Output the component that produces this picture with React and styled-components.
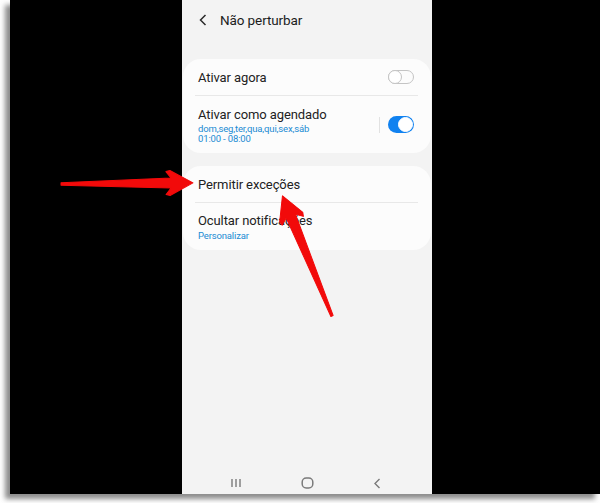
import React from 'react'
import styled, { createGlobalStyle } from 'styled-components'

const GlobalStyle = createGlobalStyle`
  html, body {
    margin: 0;
    padding: 0;
    background: #ffffff;
  }
  body {
    font-family: Roboto, "Noto Sans", "Liberation Sans", sans-serif;
    width: 600px;
    height: 503px;
    overflow: hidden;
  }
`

const Page = styled.div`
  position: relative;
  width: 600px;
  height: 503px;
`

const Backdrop = styled.div`
  margin-left: 10px;
  width: 590px;
  height: 494px;
  background: #000000;
  box-shadow: -5px 5px 5px rgba(120, 120, 120, 0.85);
  display: flex;
  padding-left: 172px;
  box-sizing: border-box;
`

const Screen = styled.div`
  width: 250px;
  height: 494px;
  background: #f3f3f3;
  display: flex;
  flex-direction: column;
`

const Header = styled.div`
  height: 40px;
  display: flex;
  align-items: center;
  padding-left: 17px;
  gap: 13px;
  color: #1c1c1c;
  font-size: 13.5px;
  letter-spacing: -0.1px;
`

const Card = styled.div`
  margin: ${p => p.$top}px 1px 0 1px;
  background: #fcfcfc;
  border-radius: 18px;
  display: flex;
  flex-direction: column;
`

const Row = styled.div`
  height: ${p => p.$height}px;
  display: flex;
  align-items: center;
  padding: 0 17px 0 15px;
`

const RowText = styled.div`
  flex: 1;
  display: flex;
  flex-direction: column;
`

const Title = styled.div`
  font-size: 13px;
  color: #222222;
  line-height: 17px;
  letter-spacing: -0.1px;
`

const Sub = styled.div`
  font-size: 9.5px;
  color: #1a8bd3;
  line-height: 10px;
  letter-spacing: -0.15px;
  margin-top: ${p => p.$gap || 0}px;
`

const Divider = styled.div`
  height: 1px;
  background: #e8e8e8;
  margin: 0 13px 0 12px;
`

const VLine = styled.div`
  width: 1px;
  height: 16px;
  background: #e2e2e2;
  margin-right: 8px;
`

const Toggle = styled.div`
  position: relative;
  width: 26px;
  height: ${p => (p.$on ? 17 : 14)}px;
  border-radius: 9px;
  box-sizing: border-box;
  background: ${p => (p.$on ? '#1182f0' : 'transparent')};
  border: ${p => (p.$on ? 'none' : '1.3px solid #c4c4c4')};
`

const Knob = styled.div`
  position: absolute;
  top: ${p => (p.$on ? 1 : -1.3)}px;
  ${p => (p.$on ? 'right: 1px;' : 'left: -1.3px;')}
  width: ${p => (p.$on ? 15 : 14)}px;
  height: ${p => (p.$on ? 15 : 14)}px;
  border-radius: 50%;
  box-sizing: border-box;
  background: #ffffff;
  border: 1.3px solid ${p => (p.$on ? '#ffffff' : '#c4c4c4')};
`

const Spacer = styled.div`
  flex: 1;
`

const NavBar = styled.div`
  height: 22px;
  display: flex;
  align-items: center;
  gap: 59px;
  padding-left: 48px;
`

const Overlay = styled.svg`
  position: absolute;
  left: 0;
  top: 0;
  pointer-events: none;
`

function Arrow({ x, y, angle, length }) {
  const L = length
  const points = [
    [0, -1.2],
    [L - 22, -5],
    [L - 27, -11.5],
    [L - 23, -12.5],
    [L, 0],
    [L - 23, 12.5],
    [L - 27, 11.5],
    [L - 22, 5],
    [0, 1.2]
  ]
    .map(p => p.join(','))
    .join(' ')
  return (
    <polygon
      points={points}
      fill="#f20a0a"
      stroke="#f20a0a"
      strokeWidth="1"
      strokeLinejoin="round"
      transform={`translate(${x} ${y}) rotate(${angle})`}
    />
  )
}

export default function App() {
  return (
    <Page>
      <GlobalStyle />
      <Backdrop>
        <Screen>
          <Header>
            <svg width="8" height="12" viewBox="0 0 8 12">
              <path d="M6.5 1 L1.5 6 L6.5 11" fill="none" stroke="#2a2a2a" strokeWidth="1.5" />
            </svg>
            <span>Não perturbar</span>
          </Header>

          <Card $top={19}>
            <Row $height={36}>
              <RowText>
                <Title>Ativar agora</Title>
              </RowText>
              <Toggle>
                <Knob />
              </Toggle>
            </Row>
            <Divider />
            <Row $height={57}>
              <RowText>
                <Title>Ativar como agendado</Title>
                <Sub $gap={1}>dom,seg,ter,qua,qui,sex,sáb</Sub>
                <Sub>01:00 - 08:00</Sub>
              </RowText>
              <VLine />
              <Toggle $on>
                <Knob $on />
              </Toggle>
            </Row>
          </Card>

          <Card $top={13}>
            <Row $height={36}>
              <RowText>
                <Title>Permitir exceções</Title>
              </RowText>
            </Row>
            <Divider />
            <Row $height={47}>
              <RowText>
                <Title>Ocultar notificações</Title>
                <Sub $gap={2}>Personalizar</Sub>
              </RowText>
            </Row>
          </Card>

          <Spacer />

          <NavBar>
            <svg width="12" height="10" viewBox="0 0 12 10">
              <path d="M2 1 V9 M6 1 V9 M10 1 V9" stroke="#7a7a7a" strokeWidth="1.4" />
            </svg>
            <svg width="13" height="12" viewBox="0 0 13 12">
              <rect x="1.2" y="1" width="10.6" height="10" rx="4" fill="none" stroke="#7a7a7a" strokeWidth="1.5" />
            </svg>
            <svg width="8" height="11" viewBox="0 0 8 11">
              <path d="M6.5 1 L2 5.5 L6.5 10" fill="none" stroke="#7a7a7a" strokeWidth="1.4" />
            </svg>
          </NavBar>
        </Screen>
      </Backdrop>

      <Overlay width="600" height="503" viewBox="0 0 600 503">
        <Arrow x={61} y={184} angle={-0.5} length={132} />
        <Arrow x={332} y={316} angle={-112.4} length={130} />
      </Overlay>
    </Page>
  )
}
